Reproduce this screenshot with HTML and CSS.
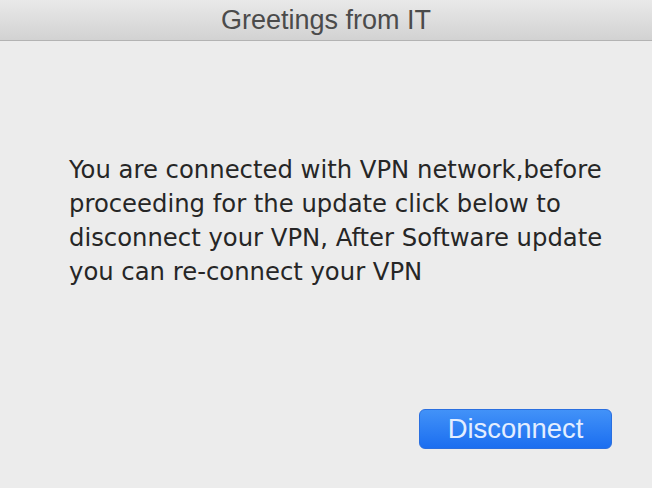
FILE: index.html
```html
<!DOCTYPE html>
<html>
<head>
<meta charset="utf-8">
<link rel="stylesheet" href="styles.css">
</head>
<body>
<div class="window">
  <div class="titlebar">Greetings from IT</div>
  <div class="content">
    <p class="message">You are connected with VPN network,before proceeding for the update click below to disconnect your VPN, After Software update you can re-connect your VPN</p>
    <div class="actions">
      <button class="btn-primary">Disconnect</button>
    </div>
  </div>
</div>
</body>
</html>
```
FILE: styles.css
```css
html, body {
  margin: 0;
  padding: 0;
  width: 652px;
  height: 488px;
  overflow: hidden;
  background: #ececec;
}
.window {
  width: 652px;
  height: 488px;
  display: flex;
  flex-direction: column;
  background: #ececec;
}
.titlebar {
  height: 40px;
  border-bottom: 1px solid #b3b3b3;
  background: linear-gradient(#e9e9e9, #d2d2d2);
  display: flex;
  align-items: center;
  justify-content: center;
  font-family: "Liberation Sans", Arial, sans-serif;
  font-size: 27px;
  color: #4b4b4b;
}
.content {
  flex: 1;
  display: flex;
  flex-direction: column;
  padding: 0 40px 39px 69px;
}
.message {
  margin: 112px 0 0 0;
  font-family: "DejaVu Sans", sans-serif;
  font-size: 24.3px;
  line-height: 34px;
  color: #262626;
  width: 545px;
}
.actions {
  margin-top: auto;
  display: flex;
  justify-content: flex-end;
}
.btn-primary {
  width: 193px;
  height: 40px;
  border: 1px solid #2a6fe0;
  border-radius: 6px;
  background: linear-gradient(#4292f8, #1b6ef0);
  color: #e3eeff;
  font-family: "Liberation Sans", Arial, sans-serif;
  font-size: 27.4px;
  padding: 0;
}
```
